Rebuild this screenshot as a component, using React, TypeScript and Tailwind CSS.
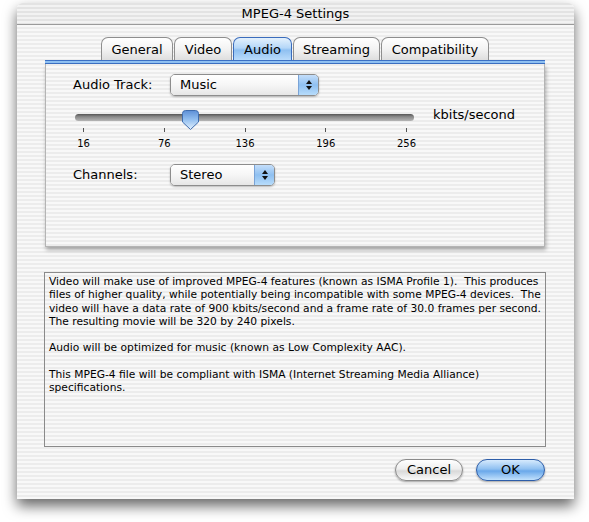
import React from "react"

const stripes = "bg-[image:repeating-linear-gradient(180deg,#ececec_0px,#ececec_2px,#f8f8f8_2px,#f8f8f8_4px)]"

const tabs = [
    { label: "General", w: "w-[72px]" },
    { label: "Video", w: "w-[58px]" },
    { label: "Audio", w: "w-[59px]", active: true },
    { label: "Streaming", w: "w-[87px]" },
    { label: "Compatibility", w: "w-[108px]" },
]

const ticks = ["16", "76", "136", "196", "256"]

const infoLines = [
    "Video will make use of improved MPEG-4 features (known as ISMA Profile 1).  This produces",
    "files of higher quality, while potentially being incompatible with some MPEG-4 devices.  The",
    "video will have a data rate of 900 kbits/second and a frame rate of 30.0 frames per second.",
    "The resulting movie will be 320 by 240 pixels.",
    "",
    "Audio will be optimized for music (known as Low Complexity AAC).",
    "",
    "This MPEG-4 file will be compliant with ISMA (Internet Streaming Media Alliance)",
    "specifications.",
]

const Arrows = () => (
    <svg width="8" height="12" viewBox="0 0 8 12">
        <path d="M4 1 L7 5 L1 5 Z" fill="#111" />
        <path d="M4 11 L7 7 L1 7 Z" fill="#111" />
    </svg>
)

const Popup = ({ value, w }: { value: string, w: string }) => (
    <div className={`${w} h-[22px] flex rounded-[5px] border border-[#8d8d8d] overflow-hidden shadow-[0_1px_2px_rgba(0,0,0,0.25)]`}>
        <div className="flex-1 flex items-center pl-[9px] text-[13px] text-black bg-[linear-gradient(180deg,#ffffff_0%,#f6f6f6_50%,#e6e6e6_100%)]">
            {value}
        </div>
        <div className="w-[20px] flex items-center justify-center border-l border-[#7aa3d6] bg-[linear-gradient(180deg,#c4defa_0%,#8fc0f1_50%,#b7dcfb_100%)]">
            <Arrows />
        </div>
    </div>
)

const Thumb = () => (
    <svg width="17" height="20" viewBox="0 0 17 20">
        <defs>
            <linearGradient id="tg" x1="0" y1="0" x2="0" y2="1">
                <stop offset="0" stopColor="#5d8fd6" />
                <stop offset="0.45" stopColor="#8fbcee" />
                <stop offset="1" stopColor="#e2f0fd" />
            </linearGradient>
        </defs>
        <path d="M3.5 0.5 H13.5 Q16.5 0.5 16.5 3.5 V12 L8.5 19.5 L0.5 12 V3.5 Q0.5 0.5 3.5 0.5 Z" fill="url(#tg)" stroke="#3f6cad" />
    </svg>
)

export default function App() {
    return (
        <div className="w-[589px] h-[522px] bg-white pt-[3px] pl-[17px] font-['DejaVu_Sans',sans-serif] text-black">
            <div className={`w-[557px] h-[496px] rounded-t-[6px] flex flex-col overflow-hidden shadow-[0_7px_14px_rgba(0,0,0,0.6)] ${stripes}`}>
                <div className="h-[22px] flex items-center justify-center text-[13px] border-b border-[#9a9a9a] bg-[image:repeating-linear-gradient(180deg,#e3e3e3_0px,#e3e3e3_2px,#f2f2f2_2px,#f2f2f2_4px)]">
                    MPEG-4 Settings
                </div>

                <div className="flex flex-col pl-[28px]">
                    <div className="mt-[12px] h-[23px] flex gap-[1px] pl-[56px]">
                        {tabs.map((t, i) => (
                            <div
                                key={i}
                                className={`${t.w} h-full flex items-center justify-center pt-[1px] text-[13px] rounded-t-[7px] border border-b-0 ${t.active
                                    ? "border-[#3a6cbc] bg-[linear-gradient(180deg,#e4f1fd_0%,#b5d7f8_45%,#8fc0f1_55%,#b9dbfb_100%)]"
                                    : "border-[#8e8e8e] bg-[linear-gradient(180deg,#ffffff_0%,#f3f3f3_50%,#dedede_100%)]"}`}
                            >
                                {t.label}
                            </div>
                        ))}
                    </div>

                    <div className="w-[500px] h-[4px] border-y border-[#3b70c4] bg-[#8ec0f2]" />

                    <div className={`w-[500px] h-[183px] border-x border-b border-[#b4b4b4] shadow-[1px_3px_4px_rgba(0,0,0,0.3)] pt-[10px] pl-[27px] flex flex-col ${stripes}`}>
                        <div className="flex items-center">
                            <div className="w-[97px] text-[13px]">Audio Track:</div>
                            <Popup value="Music" w="w-[149px]" />
                        </div>

                        <div className="flex">
                            <div className="ml-[2px] mt-[15px] w-[339px] flex flex-col">
                                <div className="relative h-[17px]">
                                    <div className="mt-[3px] h-[7px] rounded-full bg-[linear-gradient(180deg,#555_0%,#8a8a8a_40%,#b5b5b5_100%)]" />
                                    <div className="absolute left-[107px] -top-[1px]">
                                        <Thumb />
                                    </div>
                                </div>
                                <div className="w-[324px] ml-[8px] flex justify-between">
                                    {ticks.map((t, i) => (
                                        <div key={i} className="w-px flex flex-col items-center">
                                            <div className="w-px h-[4px] bg-[#555]" />
                                            <div className="mt-[6px] text-[10px] leading-[12px]">{t}</div>
                                        </div>
                                    ))}
                                </div>
                            </div>
                            <div className="ml-[19px] mt-[11px] text-[13px] leading-[16px]">kbits/second</div>
                        </div>

                        <div className="mt-[14px] flex items-center">
                            <div className="w-[97px] text-[13px]">Channels:</div>
                            <Popup value="Stereo" w="w-[105px]" />
                        </div>
                    </div>

                    <div className="-ml-[1px] mt-[25px] w-[502px] h-[175px] border border-[#8a8a8a] pt-[2px] pl-[4px] text-[10.7px] leading-[13.3px] whitespace-pre">
                        {infoLines.map((l, i) => (
                            <div key={i} className="h-[13.3px]">{l}</div>
                        ))}
                    </div>

                    <div className="mt-[12px] w-[500px] flex justify-end gap-[13px]">
                        <button className="w-[68px] h-[22px] rounded-full border border-[#8a8a8a] text-[13px] bg-[linear-gradient(180deg,#ffffff_0%,#eeeeee_45%,#d9d9d9_55%,#fafafa_100%)] shadow-[0_1px_2px_rgba(0,0,0,0.35)]">
                            Cancel
                        </button>
                        <button className="w-[69px] h-[22px] rounded-full border border-[#2d5da8] text-[13px] bg-[linear-gradient(180deg,#d6eafd_0%,#8fc0f1_45%,#6aa8ea_55%,#c2e1fc_100%)] shadow-[0_1px_2px_rgba(0,0,0,0.35)]">
                            OK
                        </button>
                    </div>
                </div>
            </div>
        </div>
    )
}
